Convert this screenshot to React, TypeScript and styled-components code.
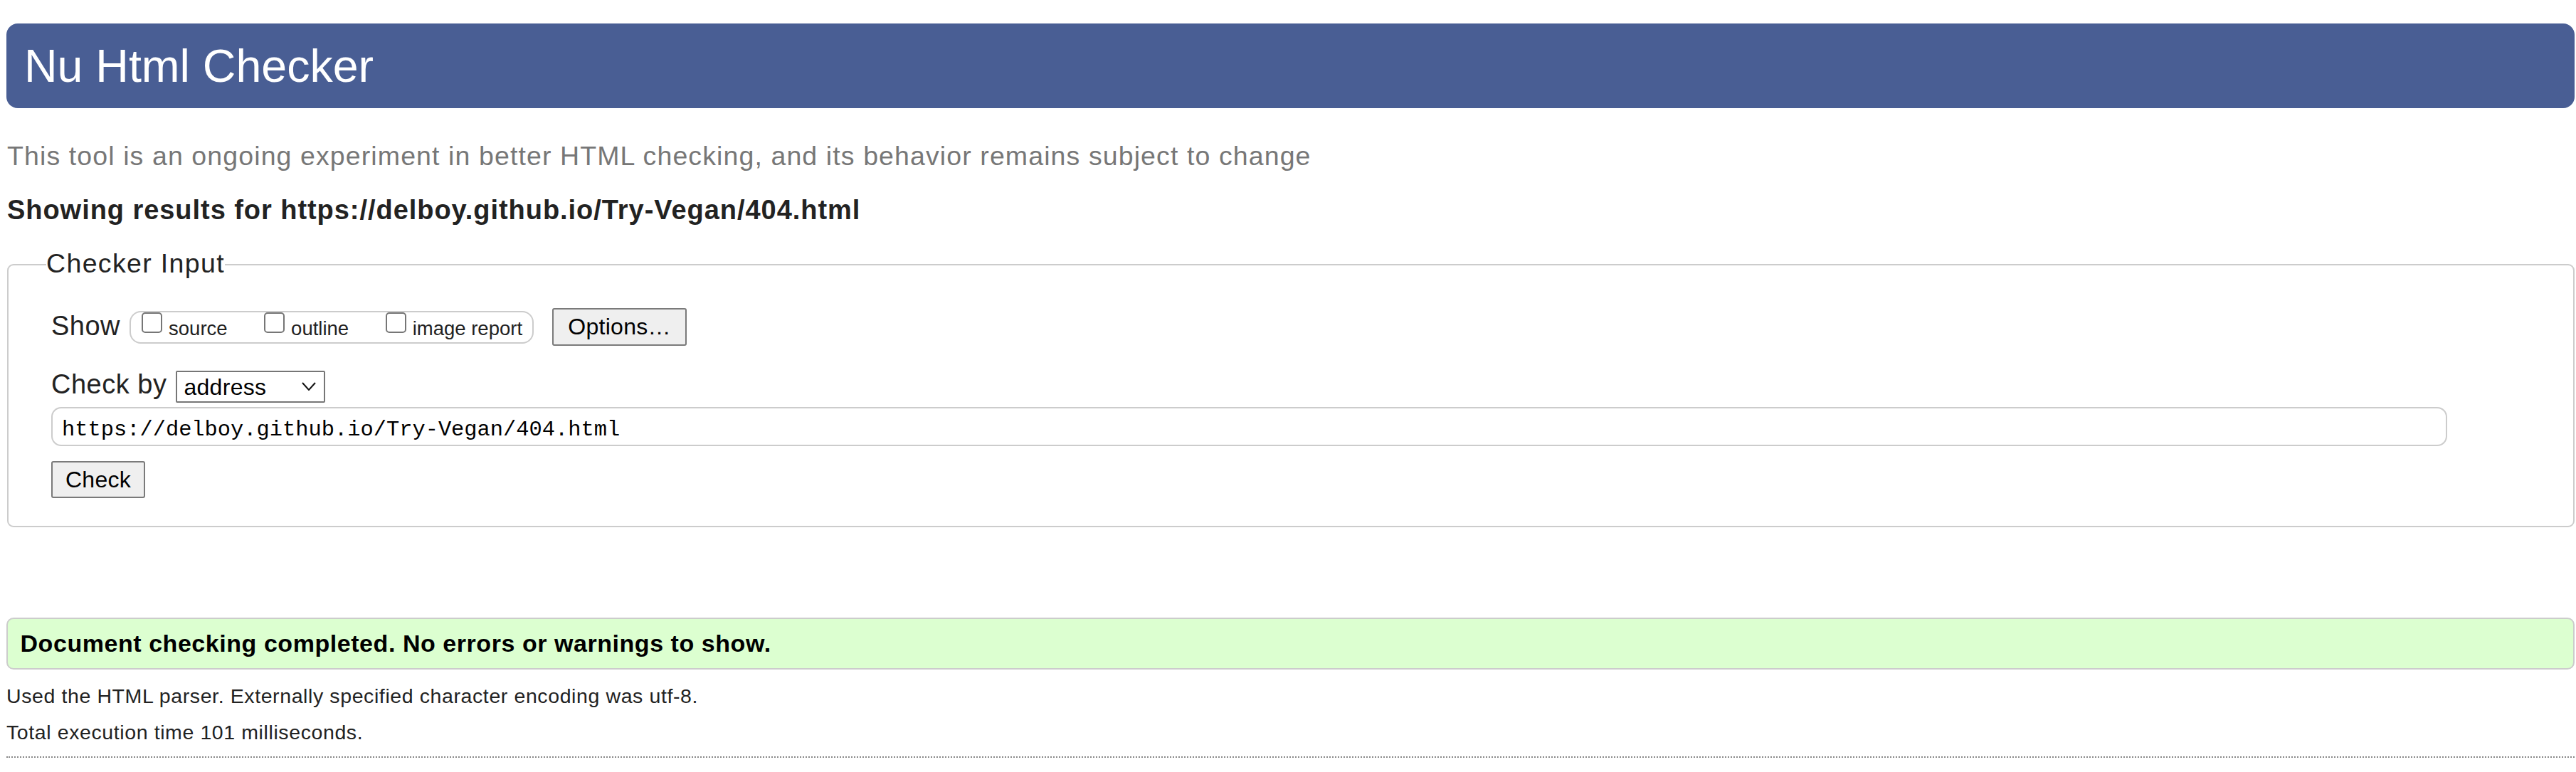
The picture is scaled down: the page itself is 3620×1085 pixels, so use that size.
import React from "react";
import styled, { createGlobalStyle } from "styled-components";

const GlobalStyle = createGlobalStyle`
  html, body {
    margin: 0;
    background: #fff;
  }
  body {
    font-family: "Liberation Sans", Arial, sans-serif;
    color: #222;
  }
`;

const Page = styled.div`
  padding: 33px 2px 0 9px;
`;

const Header = styled.header`
  height: 119px;
  box-sizing: border-box;
  padding: 2px 0 0 25px;
  background: #495e94;
  border-radius: 16px;
`;

const Title = styled.h1`
  margin: 0;
  font-size: 64.5px;
  line-height: 117px;
  font-weight: 400;
  color: #fff;
`;

const Subtitle = styled.p`
  margin: 45px 0 0 1px;
  font-size: 37.5px;
  line-height: 44px;
  letter-spacing: 1.1px;
  color: #777;
`;

const ResultsFor = styled.h2`
  margin: 32px 0 0 1px;
  font-size: 38px;
  line-height: 44px;
  letter-spacing: 0.95px;
  font-weight: 700;
  color: #222;
`;

const Fieldset = styled.fieldset`
  margin: 33px 0 0 1px;
  padding: 39px 60px;
  border: 2px solid #ccc;
  border-radius: 9px;
  min-width: 0;
`;

const Legend = styled.legend`
  margin-left: -7px;
  padding: 0 0 4px 0;
  font-size: 37.5px;
  line-height: 40px;
  letter-spacing: 1.35px;
  color: #222;
`;

const Row = styled.div<{ $mt?: number }>`
  display: flex;
  align-items: flex-start;
  margin-top: ${(p) => p.$mt ?? 0}px;
`;

const FieldLabel = styled.span<{ $lh: number }>`
  margin-right: 13px;
  font-size: 38px;
  line-height: ${(p) => p.$lh}px;
  letter-spacing: 0.5px;
  color: #222;
`;

const OptionGroup = styled.div`
  display: flex;
  align-items: flex-start;
  gap: 51.5px;
  height: 46px;
  box-sizing: border-box;
  margin-top: 4px;
  padding: 0 14px 0 15px;
  border: 2px solid #ccc;
  border-radius: 16px;
`;

const Option = styled.label`
  display: flex;
  align-items: flex-start;
  font-size: 27.5px;
  line-height: 45px;
  color: #222;
  white-space: nowrap;
`;

const Checkbox = styled.input.attrs({ type: "checkbox" })`
  appearance: none;
  width: 29px;
  height: 29px;
  margin: 0 9px 0 0;
  box-sizing: border-box;
  border: 2px solid #767676;
  border-radius: 5px;
  background: #fff;
`;

const Button = styled.button<{ $w: number; $ml?: number; $mt?: number }>`
  display: block;
  width: ${(p) => p.$w}px;
  height: ${(p) => (p.$mt ? 52 : 53)}px;
  margin: ${(p) => p.$mt ?? 0}px 0 0 ${(p) => p.$ml ?? 0}px;
  padding: 0;
  box-sizing: border-box;
  border: 2px solid #7a7a7a;
  border-radius: 3px;
  background: #efefef;
  font-family: "Liberation Sans", Arial, sans-serif;
  font-size: 32px;
  letter-spacing: 0.3px;
  color: #000;
`;

const SelectWrap = styled.span`
  position: relative;
  display: inline-block;
`;

const Select = styled.select`
  appearance: none;
  display: block;
  width: 210px;
  height: 45px;
  box-sizing: border-box;
  margin: 0;
  padding: 0 0 0 9px;
  border: 2px solid #767676;
  border-radius: 2px;
  background: #fff;
  font-family: "Liberation Sans", Arial, sans-serif;
  font-size: 32px;
  letter-spacing: 0.3px;
  color: #000;
`;

const Chevron = styled.svg`
  position: absolute;
  left: 177px;
  top: 16px;
  width: 20px;
  height: 12px;
  pointer-events: none;
`;

const UrlInput = styled.input`
  display: block;
  width: calc(100% - 117px);
  height: 55px;
  box-sizing: border-box;
  margin: 6px 0 0;
  padding: 9px 13px 0;
  border: 2px solid #ccc;
  border-radius: 14px;
  background: #fff;
  font-family: "Liberation Mono", "DejaVu Sans Mono", monospace;
  font-size: 30.4px;
  color: #000;
`;

const Notice = styled.div`
  height: 73px;
  box-sizing: border-box;
  margin-top: 127px;
  padding-left: 17.5px;
  border: 2px solid #ccc;
  border-radius: 10px;
  background: #dcffd0;
  font-size: 34px;
  font-weight: 700;
  line-height: 69px;
  letter-spacing: 0.55px;
  color: #000;
`;

const Info = styled.p<{ $mt: number }>`
  margin: ${(p) => p.$mt}px 0 0;
  font-size: 28.5px;
  line-height: 32px;
  letter-spacing: 0.6px;
  color: #222;
`;

const Rule = styled.hr`
  height: 0;
  margin: 18px 0 0;
  border: 0;
  border-top: 2px dotted #888;
`;

export default function App() {
  return (
    <>
      <GlobalStyle />
      <Page>
        <Header>
          <Title>Nu Html Checker</Title>
        </Header>
        <Subtitle>
          This tool is an ongoing experiment in better HTML checking, and its behavior remains subject to change
        </Subtitle>
        <ResultsFor>Showing results for https://delboy.github.io/Try-Vegan/404.html</ResultsFor>
        <Fieldset>
          <Legend>Checker Input</Legend>
          <Row>
            <FieldLabel $lh={50}>Show</FieldLabel>
            <OptionGroup>
              <Option>
                <Checkbox />
                source
              </Option>
              <Option>
                <Checkbox />
                outline
              </Option>
              <Option>
                <Checkbox />
                image report
              </Option>
            </OptionGroup>
            <Button type="button" $w={189} $ml={26}>
              Options…
            </Button>
          </Row>
          <Row $mt={35}>
            <FieldLabel $lh={38}>Check by</FieldLabel>
            <SelectWrap>
              <Select defaultValue="address">
                <option value="address">address</option>
                <option value="file">file upload</option>
                <option value="text">text input</option>
              </Select>
              <Chevron viewBox="0 0 20 12" fill="none">
                <polyline points="1,1 10,11 19,1" stroke="#111" strokeWidth="2" />
              </Chevron>
            </SelectWrap>
          </Row>
          <UrlInput type="url" defaultValue="https://delboy.github.io/Try-Vegan/404.html" />
          <Button type="submit" $w={132} $mt={21}>
            Check
          </Button>
        </Fieldset>
        <Notice>Document checking completed. No errors or warnings to show.</Notice>
        <Info $mt={21}>Used the HTML parser. Externally specified character encoding was utf-8.</Info>
        <Info $mt={19}>Total execution time 101 milliseconds.</Info>
        <Rule />
      </Page>
    </>
  );
}
